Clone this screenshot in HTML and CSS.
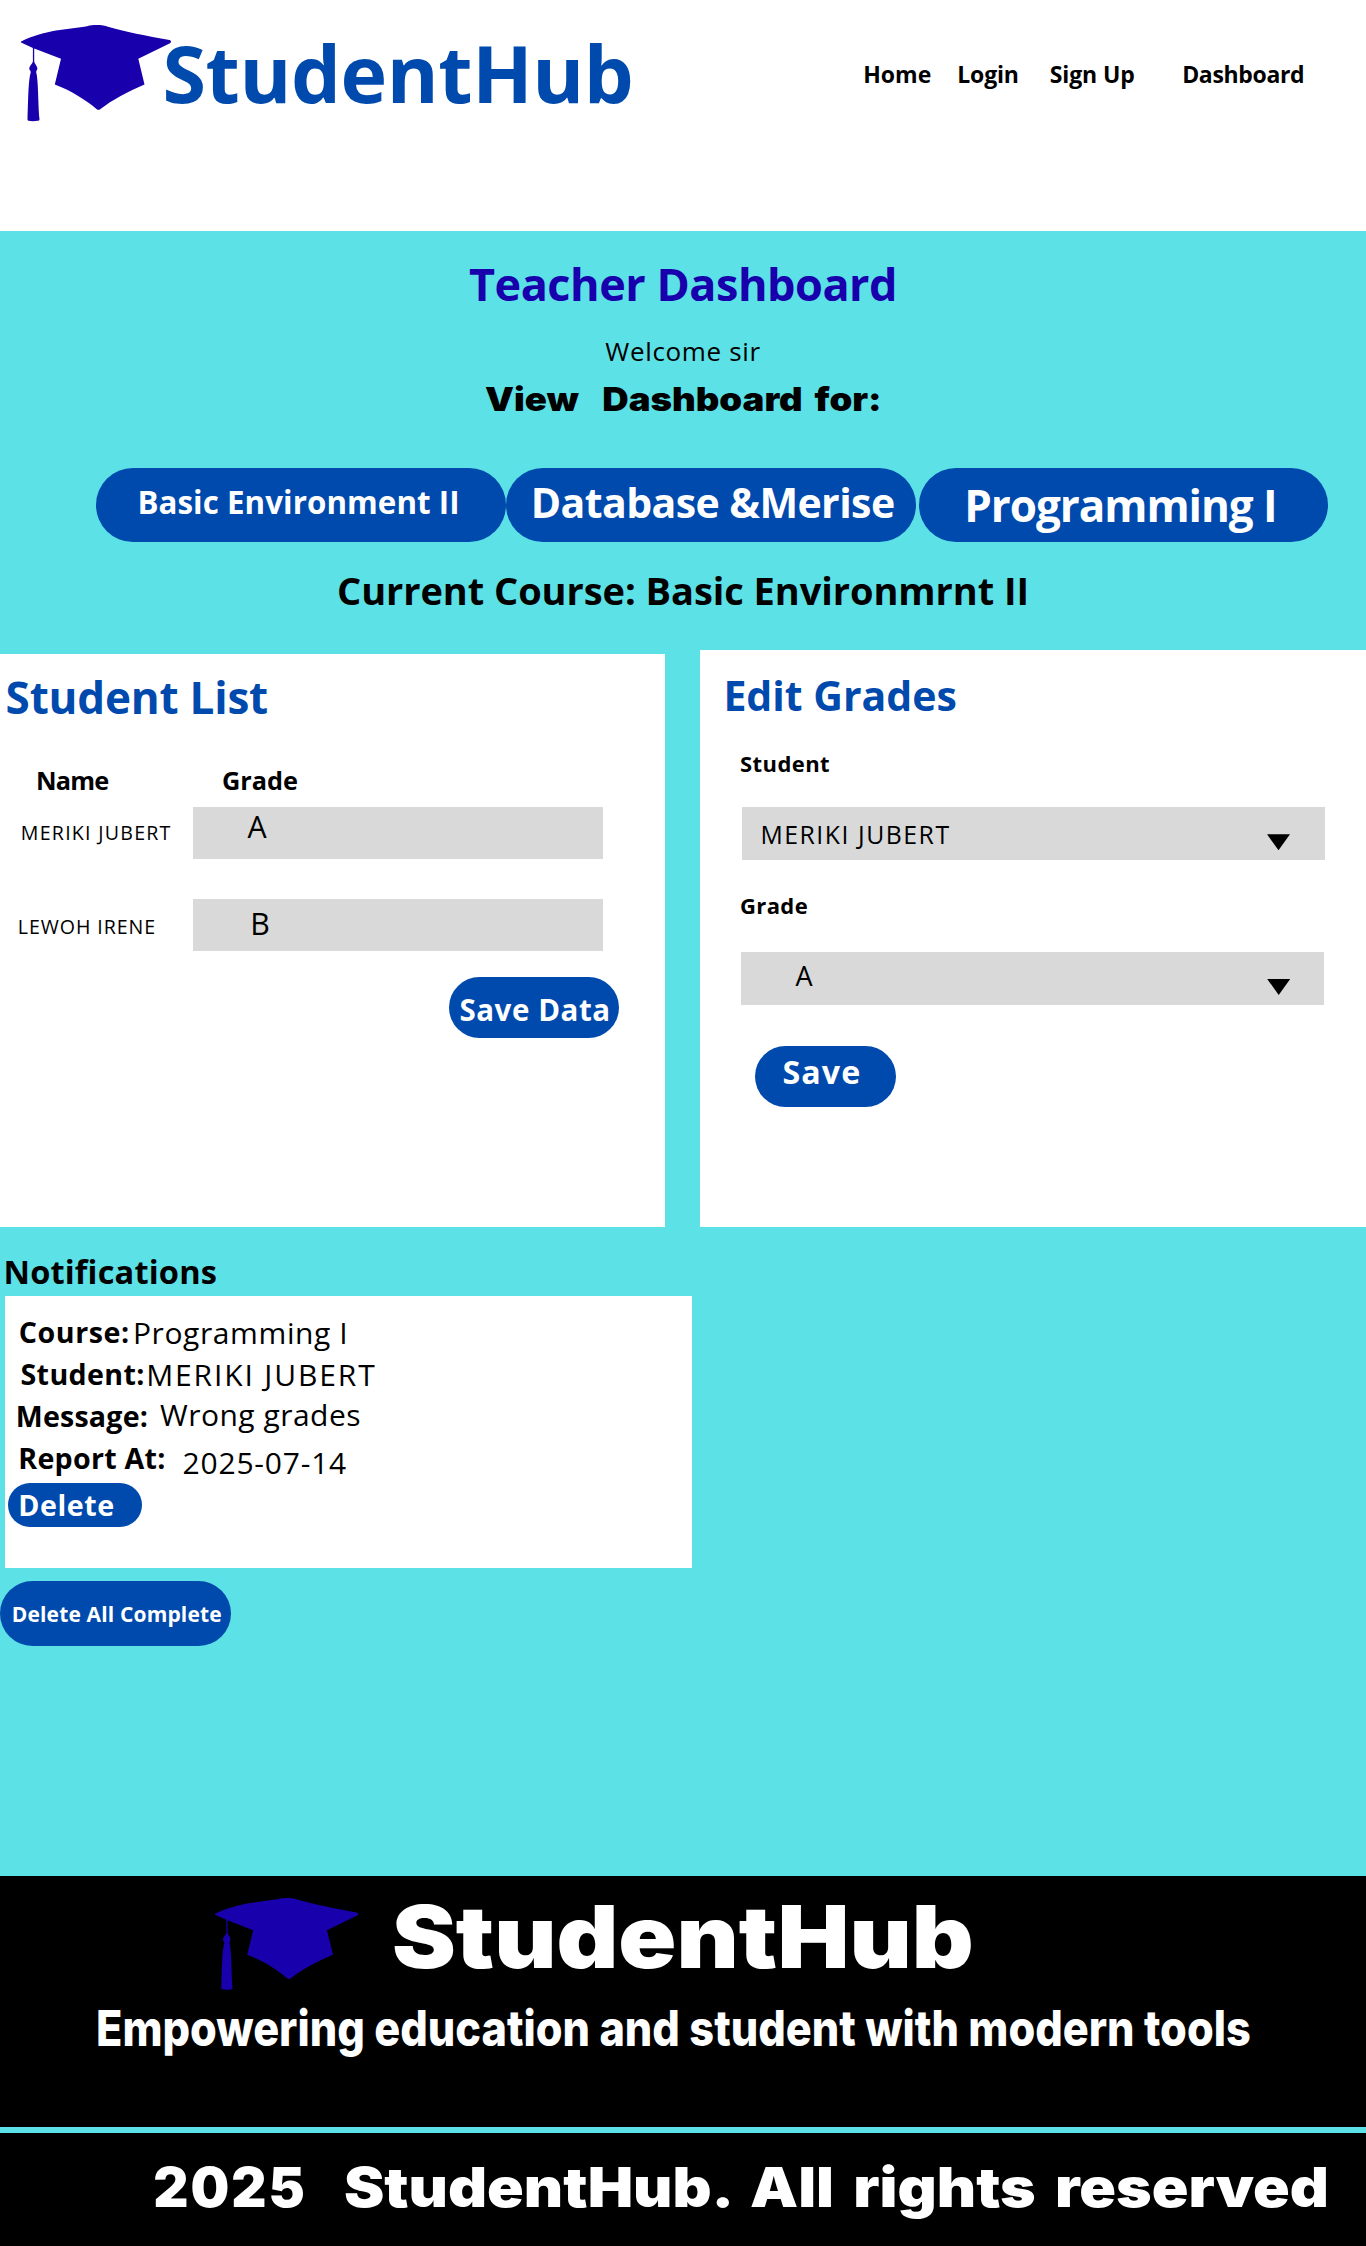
FILE: index.html
```html
<!DOCTYPE html>
<html lang="en">
<head>
<meta charset="utf-8">
<title>StudentHub – Teacher Dashboard</title>
<link rel="stylesheet" href="styles.css">
</head>
<body>
<svg class="defs" width="0" height="0" aria-hidden="true">
  <symbol id="cap" viewBox="0 0 152 97">
    <path d="M1 17.6C.6 17 1 16.6 1.6 16.3C12 11 26 7.5 36 5.6L66 1.4C73-.4 83-.4 88 1.800C104 6.500 127 11 149.500 15.100C151.300 15.800 151.500 17 150 18.300L118.300 33.700L124.500 59.500C108 66.500 92 75 80.500 84Q78.500 85.700 76.500 84C66 75 51 65.500 34.800 59.500L41 33.700L14.200 23.400V36.500C14.700 39 17 40.500 17.400 43.500C17.300 45 16 45.500 16.200 47.500C18.500 55 18 80 19.500 94C19.500 95.500 18.500 95.700 17.500 95.800C14 96.300 11 96.200 8.500 95.700Q7.400 95.400 7.500 94C8.200 80 8 57 10.700 47.500C11 45.500 9.200 45 9.200 43.500C9.500 40.500 12.400 39 12.900 36.500V22.900Q6 20 1 17.600Z"/>
  </symbol>
</svg>

<header class="header">
  <svg class="header-cap" aria-hidden="true"><use href="#cap"/></svg>
  <div class="logo">StudentHub</div>
  <nav class="nav">
    <a class="nav-home">Home</a>
    <a class="nav-login">Login</a>
    <a class="nav-signup">Sign Up</a>
    <a class="nav-dashboard">Dashboard</a>
  </nav>
</header>

<main class="main">
  <h1 class="title">Teacher Dashboard</h1>
  <p class="welcome">Welcome sir</p>
  <h2 class="view-for">View  Dashboard for:</h2>
  <div class="courses">
    <button class="btn course course-env">Basic Environment II</button>
    <button class="btn course course-db">Database &amp;Merise</button>
    <button class="btn course course-prog">Programming I</button>
  </div>
  <h2 class="current">Current Course: Basic Environmrnt II</h2>

  <div class="panels">
    <section class="panel panel-list">
      <h2 class="list-title">Student List</h2>
      <div class="list-head"><span class="head-name">Name</span><span>Grade</span></div>
      <div class="row row-first">
        <span class="name">MERIKI JUBERT</span>
        <div class="field">A</div>
      </div>
      <div class="row row-second">
        <span class="name">LEWOH IRENE</span>
        <div class="field">B</div>
      </div>
      <button class="btn save-data">Save Data</button>
    </section>

    <section class="panel panel-edit">
      <h2 class="edit-title">Edit Grades</h2>
      <div class="label label-student">Student</div>
      <div class="select select-student"><span>MERIKI JUBERT</span><i class="arrow"></i></div>
      <div class="label label-grade">Grade</div>
      <div class="select select-grade"><span>A</span><i class="arrow"></i></div>
      <button class="btn save">Save</button>
    </section>
  </div>

  <h2 class="notif-title">Notifications</h2>
  <section class="notif">
    <div class="item item-course"><b>Course:</b><span>Programming I</span></div>
    <div class="item item-student"><b>Student:</b><span>MERIKI JUBERT</span></div>
    <div class="item item-message"><b>Message:</b><span>Wrong grades</span></div>
    <div class="item item-date"><b>Report At:</b><span>2025-07-14</span></div>
    <button class="btn delete">Delete</button>
  </section>
  <button class="btn delete-all">Delete All Complete</button>
</main>

<footer class="footer">
  <div class="brand">
    <svg class="footer-cap" aria-hidden="true"><use href="#cap"/></svg>
    <div class="footer-logo">StudentHub</div>
  </div>
  <p class="tagline">Empowering education and student with modern tools</p>
</footer>
<div class="copyright"><span class="year">2025</span><span class="rights">StudentHub. All rights reserved</span></div>
</body>
</html>
```
FILE: styles.css
```css
* { box-sizing: border-box; }
body {
  margin: 0;
  width: 1366px;
  background: #5ce1e6;
  color: #000;
  font-family: "Open Sans", "Noto Sans", sans-serif;
}
h1, h2, p { margin: 0; font-weight: 700; }
.defs { display: block; }
svg { fill: #1800ad; flex: none; }

.btn {
  display: block;
  padding: 0;
  border: 0;
  border-radius: 40px;
  background: #004aad;
  color: #fff;
  font-family: inherit;
  font-weight: 700;
  text-align: left;
  white-space: nowrap;
}

/* Header */
.header {
  display: flex;
  align-items: flex-start;
  height: 231px;
  padding-left: 20px;
  background: #fff;
}
.header-cap { width: 152px; height: 97px; margin-top: 25px; }
.logo {
  margin: 33px 0 0 -9.5px;
  color: #004aad;
  font-size: 79px;
  font-weight: 700;
  line-height: 80px;
  letter-spacing: -.41px;
}
.nav {
  display: grid;
  grid-template-columns: 94px 92.6px 132.4px auto;
  width: 502.8px;
  margin: 59px 0 0 auto;
  font-size: 23px;
  font-weight: 700;
  line-height: 30px;
}
.nav-login { letter-spacing: -.15px; }
.nav-signup { letter-spacing: -.12px; }
.nav-dashboard { letter-spacing: -.34px; }

/* Intro */
.main { display: flow-root; height: 1645px; padding-top: 23px; }
.title {
  color: #1800ad;
  font-size: 45px;
  line-height: 60px;
  letter-spacing: -.47px;
  text-align: center;
}
.welcome {
  margin-top: 20.6px;
  font-size: 26px;
  font-weight: 400;
  line-height: 32px;
  letter-spacing: .65px;
  text-align: center;
}
.view-for {
  width: fit-content;
  margin: 13px auto 0;
  font-family: Inter, sans-serif;
  font-size: 32.5px;
  font-weight: 900;
  line-height: 40px;
  word-spacing: 4px;
  white-space: pre;
  transform: scaleX(1.125);
}
.courses { display: flex; margin: 48.4px 0 0 96px; }
.course { width: 409.5px; height: 74px; }
.course-env { padding: 0 0 5px 41.4px; font-size: 31.3px; letter-spacing: .06px; }
.course-db { margin-left: .5px; padding: 0 0 6px 24.8px; font-size: 41px; letter-spacing: -.58px; }
.course-prog { margin-left: 3.3px; padding: 0 0 0 45.4px; font-size: 44px; letter-spacing: -1.04px; }
.current {
  margin-top: 23px;
  font-size: 38px;
  line-height: 50px;
  letter-spacing: -.06px;
  text-align: center;
}

/* Panels */
.panels { display: flex; justify-content: space-between; align-items: flex-end; margin-top: 35px; }
.panel { display: flow-root; background: #fff; }
.panel-list { width: 665.4px; height: 573px; padding-top: 15px; }
.panel-edit { width: 666px; height: 577px; padding-top: 17px; }
.list-title {
  padding-left: 5.6px;
  color: #004aad;
  font-size: 44px;
  line-height: 56px;
  letter-spacing: -.2px;
}
.list-head {
  display: grid;
  grid-template-columns: 186px auto;
  margin: 38.2px 0 0 36px;
  font-size: 25.3px;
  font-weight: 700;
  line-height: 34px;
}
.head-name { letter-spacing: -.82px; }
.row { display: grid; grid-template-columns: 193.4px 409.4px; height: 52px; }
.row-first { margin-top: 9.5px; }
.row-second { margin-top: 40.6px; }
.name { padding: 13.3px 0 0 20.8px; font-size: 19.6px; line-height: 26px; letter-spacing: 1.25px; }
.row-second .name { padding: 14.7px 0 0 17.8px; letter-spacing: .92px; }
.field { padding: 1.3px 0 0 54px; background: #d9d9d9; font-size: 30.3px; line-height: 38px; }
.row-second .field { padding: 5.7px 0 0 56.8px; }
.save-data {
  width: 170px;
  height: 61.7px;
  margin: 25.5px 0 0 449px;
  padding: 3.2px 0 0 10.4px;
  font-size: 29.5px;
  letter-spacing: .56px;
}

.edit-title {
  padding-left: 23.4px;
  color: #004aad;
  font-size: 41px;
  line-height: 56px;
}
.label { padding-left: 40px; font-size: 22px; font-weight: 700; line-height: 30px; }
.label-student { margin-top: 25.2px; letter-spacing: .42px; }
.label-grade { margin-top: 30.8px; letter-spacing: .38px; }
.select {
  display: flex;
  justify-content: space-between;
  align-items: flex-start;
  width: 583.4px;
  height: 53px;
  background: #d9d9d9;
}
.select-student {
  margin: 28.5px 0 0 41.8px;
  padding: 10.5px 35.2px 0 18.6px;
  font-size: 24.8px;
  line-height: 34px;
  letter-spacing: 1.53px;
}
.select-grade {
  margin: 31.5px 0 0 41px;
  padding: 5.7px 34.2px 0 54.4px;
  font-size: 27px;
  line-height: 36px;
}
.arrow { width: 23px; height: 16px; background: #000; clip-path: polygon(0 0, 100% 0, 50% 100%); }
.select-student .arrow { margin-top: 17.1px; }
.select-grade .arrow { margin-top: 21.3px; }
.save {
  width: 141.4px;
  height: 61.7px;
  margin: 40.7px 0 0 54.9px;
  padding: 0 0 10.4px 27.7px;
  font-size: 32.2px;
  letter-spacing: 1.06px;
}

/* Notifications */
.notif-title {
  margin: 23px 0 0 3.5px;
  font-size: 32.6px;
  line-height: 44px;
  letter-spacing: .15px;
}
.notif {
  display: flow-root;
  width: 686.5px;
  height: 272px;
  margin: 2px 0 0 5px;
  padding-top: 14.9px;
  background: #fff;
}
.item { display: grid; height: 42px; font-size: 30px; line-height: 42px; }
.item b { font-size: 28.6px; font-weight: 700; }
.item-course { grid-template-columns: 114.2px auto; padding-left: 13.7px; }
.item-course b { letter-spacing: .58px; }
.item-course span { margin-top: 1.1px; letter-spacing: .61px; }
.item-student { grid-template-columns: 125.7px auto; padding-left: 15.5px; }
.item-student b { letter-spacing: .37px; }
.item-student span { margin-top: 1.1px; letter-spacing: 1.87px; }
.item-message { grid-template-columns: 144.2px auto; padding-left: 10.8px; }
.item-message b { letter-spacing: .19px; }
.item-message span { margin-top: -.9px; letter-spacing: .49px; }
.item-date { grid-template-columns: 164.3px auto; padding-left: 13.3px; }
.item-date b { letter-spacing: .27px; }
.item-date span { margin-top: 5.1px; letter-spacing: .79px; }
.delete {
  width: 134px;
  height: 44px;
  margin: 4.1px 0 0 2.6px;
  padding: 0 0 1px 10.7px;
  font-size: 28.6px;
  letter-spacing: .59px;
}
.delete-all {
  width: 231px;
  height: 65px;
  margin-top: 13.5px;
  padding: 0 0 0 11.8px;
  font-size: 21px;
  letter-spacing: .15px;
}

/* Footer */
.footer { height: 251px; background: #000; color: #fff; }
.brand { display: flex; align-items: flex-start; height: 114px; padding-left: 214px; }
.footer-cap { width: 145.2px; height: 92.6px; margin-top: 21.6px; }
.footer-logo {
  margin: 11px 0 0 33.2px;
  font-family: Inter, sans-serif;
  font-size: 86px;
  font-weight: 900;
  line-height: 100px;
  transform: scaleX(1.115);
  transform-origin: left;
}
.tagline {
  width: fit-content;
  margin: 8px 0 0 96px;
  font-family: Inter, sans-serif;
  font-size: 50px;
  font-weight: 800;
  line-height: 60px;
  white-space: nowrap;
  transform: scaleX(.865);
  transform-origin: left;
}
.copyright {
  display: grid;
  grid-template-columns: 191px auto;
  height: 113.5px;
  margin-top: 5.5px;
  padding: 19.6px 0 0 153.3px;
  overflow: hidden;
  background: #000;
  color: #fff;
  font-family: Inter, sans-serif;
  font-size: 54.6px;
  font-weight: 900;
  line-height: 70px;
}
.year { letter-spacing: 1.9px; }
.rights {
  justify-self: start;
  word-spacing: 6.500px;
  white-space: nowrap;
  transform: scaleX(1.11);
  transform-origin: left;
}
```
